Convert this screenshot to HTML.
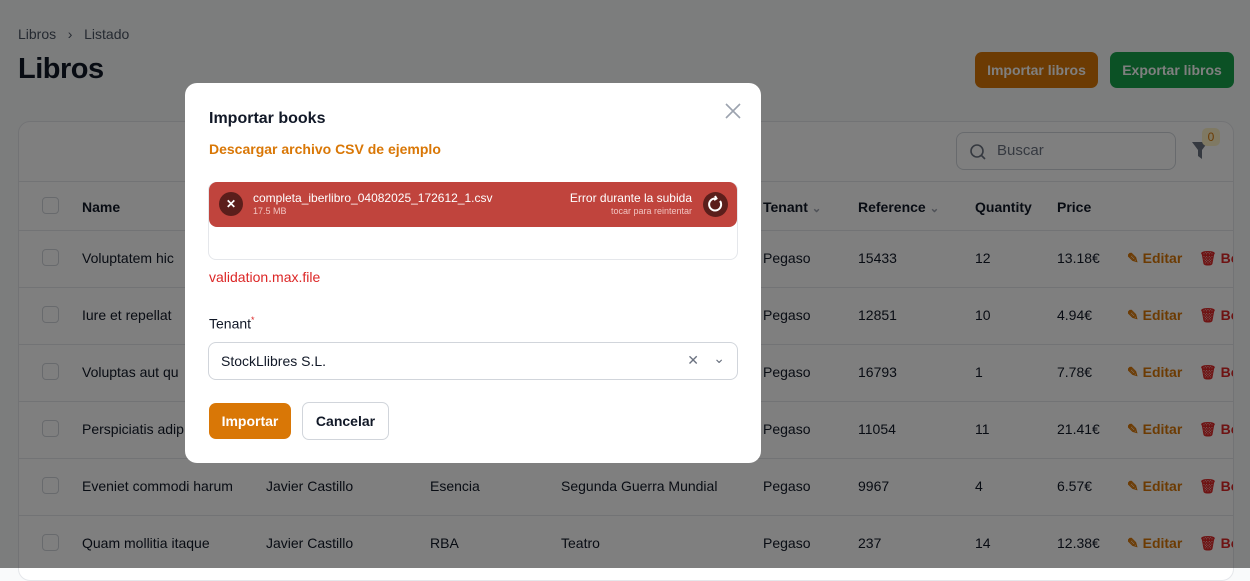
<!DOCTYPE html>
<html><head><meta charset="utf-8"><style>
*{box-sizing:border-box;margin:0;padding:0}
body{width:1250px;height:568px;overflow:hidden;background:#f9fafb;font-family:"Liberation Sans",sans-serif;color:#111827;position:relative;font-size:14px}
.bc{position:absolute;left:18px;top:26px;font-size:14px;color:#4b5563}
h1{position:absolute;left:18px;top:53px;font-size:29px;font-weight:700;letter-spacing:-0.5px}
.btn{position:absolute;top:52px;height:36px;border-radius:7px;color:#fff;font-weight:700;font-size:14px;line-height:36px;text-align:center}
.card{position:absolute;left:18px;top:121px;width:1216px;height:460px;background:#fff;border:1px solid #e5e7eb;border-radius:12px;overflow:hidden}
.search{position:absolute;left:937px;top:10px;width:220px;height:38px;border:1px solid #d1d5db;border-radius:8px;color:#6b7280;padding:9px 0 0 40px;font-size:15px}
.row{position:absolute;left:0;width:1216px;border-top:1px solid #e5e7eb;height:57px}
.row span{position:absolute;top:19px;font-size:14px;white-space:nowrap}
.cb{position:absolute;left:23px;top:18px;width:17px;height:17px;border:1px solid #d1d5db;border-radius:4px}
.ov{position:absolute;inset:0;background:rgba(0,0,0,.5)}
.modal{position:absolute;left:185px;top:83px;width:576px;height:380px;background:#fff;border-radius:12px}
.modal .t{position:absolute;left:24px;top:27px;font-size:16px;font-weight:700}
.link{position:absolute;left:24px;top:58px;color:#d97706;font-weight:700;font-size:14px}
.up{position:absolute;left:23px;top:99px;width:530px;height:78px;border:1px solid #e5e7eb;border-radius:8px}
.err{position:absolute;left:24px;top:99px;width:528px;height:45px;background:#c0443d;border-radius:8px;color:#fff}
.ed{color:#d97706;font-weight:700;left:1108px}
.bo{color:#dc2626;font-weight:700;left:1180px}
</style></head><body>
<div class="bc">Libros &nbsp;&nbsp;›&nbsp;&nbsp; Listado</div>
<h1>Libros</h1>
<div class="btn" style="left:975px;width:123px;background:#d97706">Importar libros</div>
<div class="btn" style="left:1110px;width:124px;background:#16a34a">Exportar libros</div>
<div class="card">
 <div class="search"><svg style="position:absolute;left:12px;top:10px" width="18" height="18" viewBox="0 0 18 18" fill="none" stroke="#6b7280" stroke-width="1.6"><circle cx="8" cy="8" r="6"/><path d="M12.5 12.5L16 16"/></svg>Buscar</div>
 <svg style="position:absolute;left:1172px;top:19px" width="18" height="19" viewBox="0 0 18 19"><path d="M1 1h16l-6 8v9l-4-3V9z" fill="#6b7280"/></svg>
 <div style="position:absolute;left:1183px;top:6px;width:18px;height:18px;border-radius:5px;background:#fef3c7;color:#d97706;font-size:12px;text-align:center;line-height:18px">0</div>
 <div class="row" style="top:59px;height:49px;background:#fff"><div class="cb" style="top:15px"></div>
  <span style="left:63px;top:17px;font-weight:700">Name</span>
  <span style="left:744px;top:17px;font-weight:700">Tenant <small style="color:#9ca3af">⌄</small></span>
  <span style="left:839px;top:17px;font-weight:700">Reference <small style="color:#9ca3af">⌄</small></span>
  <span style="left:956px;top:17px;font-weight:700">Quantity</span>
  <span style="left:1038px;top:17px;font-weight:700">Price</span></div>
 <div class="row" style="top:108px"><div class="cb"></div><span style="left:63px">Voluptatem hic</span><span style="left:744px">Pegaso</span><span style="left:839px">15433</span><span style="left:956px">12</span><span style="left:1038px">13.18€</span><span class="ed">✎ Editar</span><span class="bo">🗑 Bo</span></div>
 <div class="row" style="top:165px"><div class="cb"></div><span style="left:63px">Iure et repellat</span><span style="left:744px">Pegaso</span><span style="left:839px">12851</span><span style="left:956px">10</span><span style="left:1038px">4.94€</span><span class="ed">✎ Editar</span><span class="bo">🗑 Bo</span></div>
 <div class="row" style="top:222px"><div class="cb"></div><span style="left:63px">Voluptas aut qu</span><span style="left:744px">Pegaso</span><span style="left:839px">16793</span><span style="left:956px">1</span><span style="left:1038px">7.78€</span><span class="ed">✎ Editar</span><span class="bo">🗑 Bo</span></div>
 <div class="row" style="top:279px"><div class="cb"></div><span style="left:63px">Perspiciatis adip</span><span style="left:744px">Pegaso</span><span style="left:839px">11054</span><span style="left:956px">11</span><span style="left:1038px">21.41€</span><span class="ed">✎ Editar</span><span class="bo">🗑 Bo</span></div>
 <div class="row" style="top:336px"><div class="cb"></div><span style="left:63px">Eveniet commodi harum</span><span style="left:247px">Javier Castillo</span><span style="left:411px">Esencia</span><span style="left:542px">Segunda Guerra Mundial</span><span style="left:744px">Pegaso</span><span style="left:839px">9967</span><span style="left:956px">4</span><span style="left:1038px">6.57€</span><span class="ed">✎ Editar</span><span class="bo">🗑 Bo</span></div>
 <div class="row" style="top:393px"><div class="cb"></div><span style="left:63px">Quam mollitia itaque</span><span style="left:247px">Javier Castillo</span><span style="left:411px">RBA</span><span style="left:542px">Teatro</span><span style="left:744px">Pegaso</span><span style="left:839px">237</span><span style="left:956px">14</span><span style="left:1038px">12.38€</span><span class="ed">✎ Editar</span><span class="bo">🗑 Bo</span></div>
</div>
<div class="ov"></div>
<div class="modal">
 <div class="t">Importar books</div>
 <svg style="position:absolute;left:540px;top:20px" width="16" height="16" viewBox="0 0 16 16" stroke="#9ca3af" stroke-width="1.6"><path d="M1 1L15 15M15 1L1 15"/></svg>
 <div class="link">Descargar archivo CSV de ejemplo</div>
 <div class="up"></div>
 <div class="err">
  <div style="position:absolute;left:10px;top:10px;width:24px;height:24px;border-radius:50%;background:#5b1e1b;text-align:center;line-height:24px;font-size:12px;font-weight:700">✕</div>
  <div style="position:absolute;left:44px;top:9px;font-size:12px">completa_iberlibro_04082025_172612_1.csv</div>
  <div style="position:absolute;left:44px;top:24px;font-size:9px;color:#f1c3c0">17.5 MB</div>
  <div style="position:absolute;right:45px;top:9px;font-size:12px">Error durante la subida</div>
  <div style="position:absolute;right:45px;top:24px;font-size:9px;color:#f1c3c0">tocar para reintentar</div>
  <div style="position:absolute;right:9px;top:10px;width:25px;height:25px;border-radius:50%;background:#5b1e1b"><svg width="25" height="25" viewBox="0 0 25 25" fill="none" stroke="#fff" stroke-width="2"><path d="M17 9A6 6 0 1 1 12.5 6.5"/><path d="M12 4l1.5 2.5L11 8"/></svg></div>
 </div>
 <div style="position:absolute;left:24px;top:186px;color:#dc2626;font-size:14px">validation.max.file</div>
 <div style="position:absolute;left:24px;top:232px;font-size:14px">Tenant<sup style="color:#dc2626;font-size:9px">*</sup></div>
 <div style="position:absolute;left:23px;top:259px;width:530px;height:38px;border:1px solid #d1d5db;border-radius:8px;padding:10px 12px;font-size:14px">StockLlibres S.L.<span style="position:absolute;right:38px;top:9px;color:#6b7280">✕</span><span style="position:absolute;right:12px;top:7px;color:#6b7280">⌄</span></div>
 <div style="position:absolute;left:24px;top:320px;width:82px;height:36px;background:#d97706;border-radius:7px;color:#fff;font-weight:700;text-align:center;line-height:36px">Importar</div>
 <div style="position:absolute;left:117px;top:319px;width:87px;height:38px;border:1px solid #d1d5db;border-radius:7px;font-weight:700;text-align:center;line-height:36px">Cancelar</div>
</div>
</body></html>
